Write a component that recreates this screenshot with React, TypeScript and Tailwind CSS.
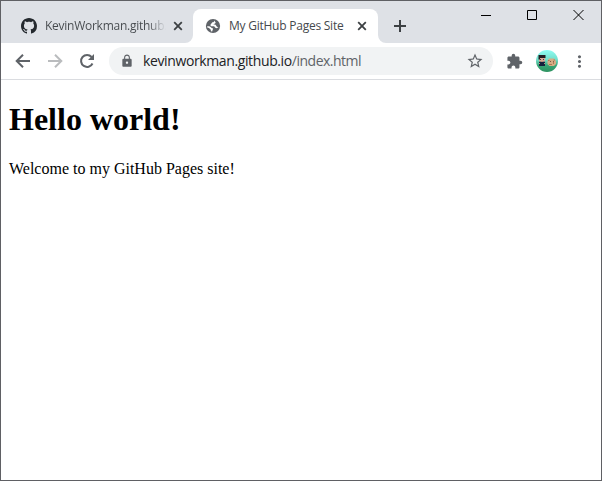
import React from "react";
import { MdLock, MdExtension, MdMoreVert, MdStarBorder } from "react-icons/md";

const UI = "font-['Open_Sans','Noto_Sans',sans-serif]";

function GitHubMark() {
  return (
    <svg className="size-4 shrink-0" viewBox="0 0 16 16" fill="#24292e">
      <path fillRule="evenodd" d="M8 0C3.58 0 0 3.58 0 8c0 3.54 2.29 6.53 5.47 7.59.4.07.55-.17.55-.38 0-.19-.01-.82-.01-1.49-2.01.37-2.53-.49-2.69-.94-.09-.23-.48-.94-.82-1.13-.28-.15-.68-.52-.01-.53.63-.01 1.08.58 1.23.82.72 1.21 1.87.87 2.33.66.07-.52.28-.87.51-1.07-1.78-.2-3.64-.89-3.64-3.95 0-.87.31-1.59.82-2.15-.08-.2-.36-1.02.08-2.12 0 0 .67-.21 2.2.82.64-.18 1.32-.27 2-.27s1.36.09 2 .27c1.53-1.04 2.2-.82 2.2-.82.44 1.1.16 1.92.08 2.12.51.56.82 1.27.82 2.15 0 3.07-1.87 3.75-3.65 3.95.29.25.54.73.54 1.48 0 1.07-.01 1.93-.01 2.2 0 .21.15.46.55.38A8.01 8.01 0 0 0 16 8c0-4.42-3.58-8-8-8z" />
    </svg>
  );
}

function Globe() {
  return (
    <svg className="size-4 shrink-0" viewBox="0 0 16 16">
      <circle cx="8" cy="8" r="7.100" fill="#5f6368" />
      <path d="M9.200 2.500c.2 1.300-.4 1.700-1.900 1.800-.5 1.300-1.800 1.600-1.800 2.900 0 .8.700 1.100 1.500 1.100h1.800c1 0 1.100 1.900 2.500 1.900 1 0 1.700-.4 2.100-1.100-.4-.2-1.200-.2-1.700-.7-.7-.7-.7-1.800-1.800-1.800H8.300c0-.7 2.300-.8 2.400-2.100z" fill="#fff" />
      <path d="M2.200 8.300c1.500-.3 3-.1 3.700 1 .5.800 1.600.5 1.900 1.300.4 1-.4 1.700-.6 3l-1.400-.3c.3-1 0-1.700-.7-2.200-.8-.6-1.500-1.700-2.900-1.600z" fill="#fff" />
    </svg>
  );
}

function CloseX() {
  return (
    <svg className="size-4 shrink-0" viewBox="0 0 16 16" fill="none" stroke="#3c4043" strokeWidth="1.8">
      <path d="M4.200 4.200l7.600 7.600M11.800 4.200l-7.600 7.600" />
    </svg>
  );
}

function Avatar() {
  return (
    <svg className="size-[22px] shrink-0" viewBox="0 0 22 22">
      <defs>
        <linearGradient id="sky" x1="0" y1="0" x2="0" y2="1">
          <stop offset="0" stopColor="#8ffcf4" />
          <stop offset=".45" stopColor="#72ddc8" />
          <stop offset=".7" stopColor="#38a576" />
          <stop offset="1" stopColor="#2e9260" />
        </linearGradient>
        <clipPath id="disc"><circle cx="11" cy="11" r="11" /></clipPath>
      </defs>
      <g clipPath="url(#disc)">
        <rect width="22" height="22" fill="url(#sky)" />
        <path d="M3 11.500h6V16H3z" fill="#16213d" />
        <path d="M3 7h6v4.500H3z" fill="#d9a996" />
        <path d="M2.500 5h7v3H4v1.500H2.500z" fill="#231c20" />
        <path d="M4 9h1v1H4zM7 9h1v1H7z" fill="#493b43" />
        <path d="M5 11h2v1H5zM3 13h1v1H3zM8 13h1v1H8z" fill="#c48b7a" />
        <path d="M11.500 11l1.500-2.500h5l2 2.500v3l-2 2h-4.500l-2-2z" fill="#d6ad85" />
        <path d="M12 10h1.500v1H12zM17.500 9.500H19v1h-1.500zM13 14h3v1h-3zM17 12h1v2h-1z" fill="#ae7b55" />
        <path d="M14 11h1v1h-1zM17 11h.8v1H17z" fill="#765444" />
      </g>
    </svg>
  );
}

export default function App() {
  return (
    <div className="flex h-[481px] w-[602px] flex-col overflow-hidden border border-[#5f6064] bg-white">
      <header className="flex h-[42px] shrink-0 bg-[#dee1e6]">
        <div className="flex w-[184px] items-end">
          <div className="flex h-[34px] w-full items-center pl-5">
            <GitHubMark />
            <div className={`${UI} ml-2 w-[121px] whitespace-nowrap bg-gradient-to-r from-[#45494d] from-85% to-transparent bg-clip-text text-[12px] leading-4 tracking-[-0.26px] text-transparent`}>
              KevinWorkman.github.
            </div>
            <div className="ml-1"><CloseX /></div>
          </div>
        </div>
        <div className="flex items-end">
          <svg className="size-2" viewBox="0 0 8 8"><path d="M8 0v8H0a8 8 0 0 0 8-8z" fill="#fff" /></svg>
          <div className="flex h-[34px] w-[185px] items-center rounded-t-lg bg-white pl-3">
            <Globe />
            <div className={`${UI} ml-2 w-[121px] whitespace-nowrap text-[12px] leading-4 tracking-[-0.24px] text-[#45494d]`}>My GitHub Pages Site</div>
            <div className="ml-1"><CloseX /></div>
          </div>
          <svg className="size-2" viewBox="0 0 8 8"><path d="M0 0v8h8a8 8 0 0 1-8-8z" fill="#fff" /></svg>
        </div>
        <svg className="ml-2 mt-[18px] size-[13px]" viewBox="0 0 13 13" fill="none" stroke="#3c4043" strokeWidth="2"><path d="M6 1v12M0 7h12" /></svg>
        <div className="ml-auto mr-[17px] mt-2 flex gap-[35px]">
          <svg className="size-[11px]" viewBox="0 0 11 11"><path d="M0 6.500h10" stroke="#000" fill="none" /></svg>
          <svg className="size-[11px]" viewBox="0 0 11 11"><path d="M.5 1.500h9v9h-9z" stroke="#000" fill="none" /></svg>
          <svg className="size-[11px]" viewBox="0 0 11 11"><path d="M.5 1l10 10M10.500 1l-10 10" stroke="#000" fill="none" /></svg>
        </div>
      </header>
      <nav className="flex h-[37px] shrink-0 items-center border-b border-[#dadce0] pl-3 text-[#5f6368]">
        <svg className="size-5 shrink-0" viewBox="0 0 20 20" fill="none" stroke="currentColor" strokeWidth="2"><path d="M17 10H4.500M10 3.700L3.700 10l6.300 6.300" /></svg>
        <svg className="ml-3 size-5 shrink-0 text-[#babcbe]" viewBox="0 0 20 20" fill="none" stroke="currentColor" strokeWidth="2"><path d="M3 10h12.500M10 3.700l6.300 6.300-6.300 6.300" /></svg>
        <svg className="ml-3 size-5 shrink-0" viewBox="0 0 20 20"><path d="M15.500 12.500A6 6 0 1 1 14.600 6" fill="none" stroke="currentColor" strokeWidth="2" /><path d="M17 3v6h-6z" fill="currentColor" /></svg>
        <div className="ml-3 flex h-7 w-[384px] items-center rounded-full bg-[#f1f3f4] pl-[11px] pr-[9px]">
          <MdLock className="size-[14px]" />
          <div className={`${UI} ml-[9px] whitespace-nowrap text-[14px] leading-5 tracking-[-0.5px] text-[#5f6368]`}>
            <span className="tracking-[-0.38px] text-[#202124]">kevinworkman.github.io</span>/index.html
          </div>
          <MdStarBorder className="ml-auto size-[18px]" />
        </div>
        <MdExtension className="ml-[13px] size-[17px]" />
        <div className="ml-[13px]"><Avatar /></div>
        <MdMoreVert className="ml-3 size-[19px]" />
      </nav>
      <main className="pl-2 font-['Liberation_Serif','Times_New_Roman',serif] text-black">
        <h1 className="mt-[21px] text-[32px] font-bold leading-[37px]">Hello world!</h1>
        <p className="mt-[22px] text-[16px] leading-[18px]">Welcome to my GitHub Pages site!</p>
      </main>
    </div>
  );
}
